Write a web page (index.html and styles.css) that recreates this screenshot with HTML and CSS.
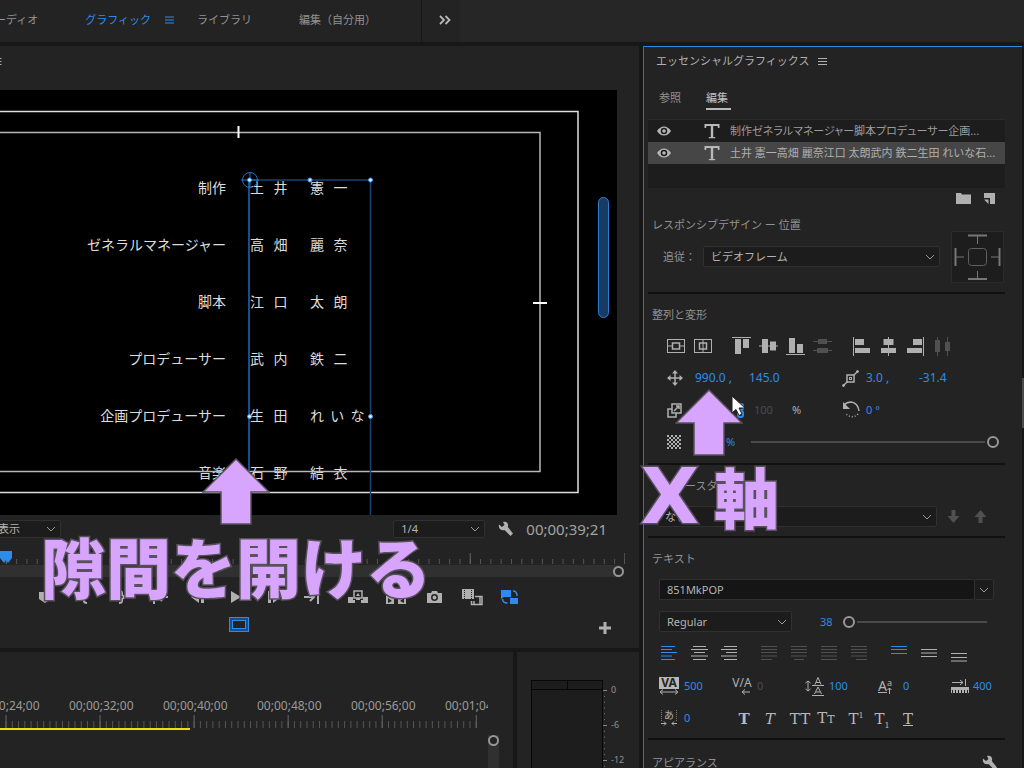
FILE: index.html
```html
<!DOCTYPE html>
<html lang="ja">
<head>
<meta charset="utf-8">
<meta name="viewport" content="width=device-width, initial-scale=1">
<title>エッセンシャルグラフィックス</title>
<link rel="stylesheet" href="styles.css">
</head>
<body>
<svg class="defs" width="0" height="0" aria-hidden="true">
  <symbol id="menu" viewBox="0 0 9 9"><path d="M0 1.500h9M0 4.500h9M0 7.500h9" stroke="currentColor" fill="none"/></symbol>
  <symbol id="eye" viewBox="0 0 14 10"><path d="M0 5Q3 .5 7 .5T14 5Q11 9.500 7 9.500T0 5Z" fill="currentColor"/><circle cx="7" cy="5" r="3.300" fill="#1d1d1d"/><circle cx="7" cy="5" r="1.800" fill="currentColor"/></symbol>
  <symbol id="type" viewBox="0 0 16 16"><path d="M.5 1h15v4h-1.500l-.5-2H9.200v11h2v1.300H4.800V14h2V3H2.500L2 5H.5Z" fill="currentColor"/></symbol>
  <symbol id="wrench" viewBox="0 0 16 16"><path d="M1 3.500 4 6 6.500 4 5 1C9 0 11 3 9.800 6L15 12.500 12.500 15 6.500 9C3 10 0 7.500 1 3.500Z" fill="currentColor"/></symbol>
  <symbol id="lines" viewBox="0 0 16 16"><path d="M0 1.500h16M0 4.500h16M0 7.500h16M0 11h16M0 14.500h16" stroke="currentColor" fill="none"/></symbol>
  <symbol id="arrow" viewBox="0 0 68 67"><path d="M34 1 67 34H49v32H19V34H1Z" fill="#d8a5fe" stroke="#58515c" stroke-width="1.500"/></symbol>
</svg>
<div class="app">
  <header class="topbar">
    <nav class="workspaces">
      <button class="workspace">オーディオ</button>
      <button class="workspace active">グラフィック<svg width="9" height="10"><use href="#menu"/></svg></button>
      <button class="workspace">ライブラリ</button>
      <button class="workspace">編集（自分用）</button>
    </nav>
    <button class="more" aria-label="その他"><svg width="12" height="10" viewBox="0 0 12 10" fill="none" stroke="#b8b8b8" stroke-width="1.800"><path d="M1 1l4 4-4 4M6.500 1l4 4-4 4"/></svg></button>
    <div class="topbar-rest"></div>
  </header>
  <main class="main">
    <div class="left">
      <section class="monitor">
        <div class="monitor-head"><svg width="10" height="9"><use href="#menu"/></svg></div>
        <div class="canvas">
          <div class="credits">
            <span class="role">制作</span><span>土   井</span><span>憲   一</span>
            <span class="role">ゼネラルマネージャー</span><span>高   畑</span><span>麗   奈</span>
            <span class="role">脚本</span><span>江   口</span><span>太   朗</span>
            <span class="role">プロデューサー</span><span>武   内</span><span>鉄   二</span>
            <span class="role">企画プロデューサー</span><span>生   田</span><span>れ  い  な</span>
            <span class="role">音楽</span><span>石   野</span><span>結   衣</span>
          </div>
          <svg class="guides" width="617" height="425" viewBox="0 90 617 425" fill="none">
            <path d="M-5 111.500H578V492.500H-5" stroke="#e0e0e0" stroke-width="1.500"/>
            <path d="M-5 132.500H540V471.500H-5" stroke="#b8b8b8" stroke-width="1.500"/>
            <path d="M238.500 126v12M533 303h14" stroke="#fff" stroke-width="2"/>
            <path d="M249 180V471" stroke="#174f8c" stroke-width="2"/>
            <path d="M249 180H370.500V515" stroke="#174272" stroke-width="1.500"/>
            <circle cx="250" cy="180" r="7.500" stroke="#2274c4"/><path d="M241 180h18M250 172v16" stroke="#2274c4"/>
            <g fill="#d9ecff" stroke="#3b91e8"><circle cx="249.500" cy="180" r="2"/><circle cx="310" cy="180" r="2"/><circle cx="370.500" cy="180" r="2"/><circle cx="249.500" cy="416.500" r="2"/><circle cx="370.500" cy="416.500" r="2"/></g>
            <rect x="598.500" y="197.500" width="10" height="120" rx="5" fill="#173b61" stroke="#2b7fd3"/>
          </svg>
        </div>
        <div class="monitor-row">
          <select class="field zoom-field" aria-label="ズーム"><option>全体表示</option></select>
          <select class="field quality" aria-label="再生時の解像度"><option>1/4</option></select>
          <button class="icon" aria-label="設定"><svg width="16" height="16"><use href="#wrench"/></svg></button>
          <span class="timecode">00;00;39;21</span>
        </div>
        <div class="scrub">
          <svg class="scrub-ticks" width="640" height="28" viewBox="0 550 640 28" fill="none">
            <rect y="565" width="620" height="12" fill="#303030"/>
            <path d="M5.800 561.500H625" stroke="#555" stroke-width="5" stroke-dasharray="1 9.310"/>
            <path d="M5.800 558.500H625" stroke="#666" stroke-width="11" stroke-dasharray="1 153.650"/>
            <path d="M0 551h12v7l-4 5-2-3-2 3-4-5Z" fill="#2d8ceb"/>
            <circle cx="618.500" cy="571.500" r="4.500" fill="#232323" stroke="#969696" stroke-width="2"/>
          </svg>
        </div>
        <div class="transport">
          <div class="buttons">
            <button class="icon" aria-label="マーカー"><svg width="14" height="14" viewBox="0 0 14 14"><path d="M0 2h12v7l-6 4-6-4Z" fill="currentColor"/></svg></button>
            <button class="icon" aria-label="イン"><svg width="8" height="14" viewBox="0 0 8 14"><path d="M7 1Q4 1 4 3v2L1 7l3 2v2q0 2 3 2" stroke="currentColor" stroke-width="2" fill="none"/></svg></button>
            <button class="icon" aria-label="アウト"><svg width="8" height="14" viewBox="0 0 8 14"><path d="M1 1q3 0 3 2v2l3 2-3 2v2q0 2-3 2" stroke="currentColor" stroke-width="2" fill="none"/></svg></button>
            <button class="icon" aria-label="インへ移動"><svg width="16" height="14" viewBox="0 0 16 14"><path d="M2 0v14M16 7H6M10 3 6 7l4 4" stroke="currentColor" stroke-width="2" fill="none"/></svg></button>
            <button class="icon" aria-label="前へ"><svg width="14" height="12" viewBox="0 0 14 12"><path d="M8 0v12L0 6ZM10 0h3v12h-3Z" fill="currentColor"/></svg></button>
            <button class="icon" aria-label="再生"><svg width="12" height="14" viewBox="0 0 12 14"><path d="M1 1l10 6-10 6Z" fill="currentColor"/></svg></button>
            <button class="icon" aria-label="次へ"><svg width="14" height="12" viewBox="0 0 14 12"><path d="M6 0v12l8-6ZM1 0h3v12H1Z" fill="currentColor"/></svg></button>
            <button class="icon" aria-label="アウトへ移動"><svg width="16" height="14" viewBox="0 0 16 14"><path d="M14 0v14M0 7h10M6 3l4 4-4 4" stroke="currentColor" stroke-width="2" fill="none"/></svg></button>
          </div>
          <div class="buttons">
            <button class="icon" aria-label="リフト"><svg width="20" height="14" viewBox="0 0 20 14"><path d="M0 7h5v3h3v-2h4v2h3V7h5v6h-7v-3H7v3H0Z" fill="currentColor"/><path d="M6 1h8v7H6Z" fill="#232323" stroke="currentColor" stroke-width="1.500"/><path d="M8 6l2-3 2 3Z" fill="currentColor"/></svg></button>
            <button class="icon" aria-label="抽出"><svg width="20" height="14" viewBox="0 0 20 14"><path d="M0 6h8v8H0ZM12 6h8v8h-8Z" fill="currentColor"/><path d="M2 8l4 3-4 2M18 8l-4 3 4 2" fill="#232323"/></svg></button>
            <button class="icon" aria-label="フレームを書き出し"><svg width="15" height="12" viewBox="0 0 15 12"><path d="M0 2h4l1-2h5l1 2h4v10H0Z" fill="currentColor"/><circle cx="7.500" cy="6.500" r="2.700" stroke="#232323" stroke-width="1.500" fill="none"/></svg></button>
            <button class="icon" aria-label="比較表示"><svg width="21" height="17" viewBox="0 0 21 17"><path d="M0 0h12v10H0Z" fill="currentColor"/><path d="M2.500 1v9M9.500 1v9" stroke="#232323" stroke-dasharray="1 1"/><path d="M13 7.500h7v8H9.500V12M12 12v3M18 8v8" stroke="currentColor" stroke-width="1.500" fill="none"/></svg></button>
            <button class="icon blue" aria-label="プロキシの切り替え"><svg width="18" height="16" viewBox="0 0 18 16"><path d="M0 1h10v7H3L0 10ZM9 9h8v6H9Z" fill="currentColor"/><path d="M12 2q4 0 4 5M1.500 10q0 4 5 4" stroke="currentColor" stroke-width="1.500" fill="none"/></svg></button>
          </div>
        </div>
        <div class="extra">
          <button class="icon blue" aria-label="セーフマージン"><svg width="20" height="15" viewBox="0 0 20 15"><rect x=".5" y=".5" width="19" height="14" fill="#1d4e83" stroke="currentColor"/><rect x="3.500" y="3.500" width="13" height="8" fill="#232323" stroke="currentColor"/></svg></button>
          <button class="icon add" aria-label="ボタンエディター"><svg width="12" height="12" viewBox="0 0 12 12"><path d="M6 0v12M0 6h12" stroke="currentColor" stroke-width="3"/></svg></button>
        </div>
      </section>
      <div class="bottom">
        <section class="timeline">
          <div class="times"><span>00;00;24;00</span><span>00;00;32;00</span><span>00;00;40;00</span><span>00;00;48;00</span><span>00;00;56;00</span><span>00;01;04;00</span></div>
          <svg class="ruler" width="488" height="16" viewBox="0 714 488 16" fill="none">
            <path d="M5.500 724.500H482" stroke="#555" stroke-width="7" stroke-dasharray="1 5.270"/>
            <path d="M5.500 721.500H482" stroke="#666" stroke-width="13" stroke-dasharray="1 93.050"/>
            <path d="M0 729H190" stroke="#e6e212" stroke-width="2"/>
          </svg>
          <div class="vscroll"><span></span></div>
        </section>
        <section class="meter">
          <div class="meter-box"><div class="peaks"><i></i><i></i></div></div>
          <svg class="meter-ticks" width="5" height="78" viewBox="0 0 5 78"><path d="M1.500 0v78" stroke="#777" stroke-dasharray="1 4.830"/><path d="M0 .5h4M0 35.500h4M0 70.500h4" stroke="#888"/></svg>
          <div class="levels"><span>0</span><span>-6</span><span>-12</span></div>
        </section>
      </div>
    </div>

    <aside class="panel">
      <h1 class="panel-title">エッセンシャルグラフィックス<svg width="9" height="9"><use href="#menu"/></svg></h1>
      <div class="tabs"><button class="tab">参照</button><button class="tab selected">編集</button></div>
      <div class="layers">
        <div class="layer"><svg width="14" height="10"><use href="#eye"/></svg><svg width="16" height="16"><use href="#type"/></svg><span class="palt">制作ゼネラルマネージャー脚本プロデューサー企画...</span></div>
        <div class="layer chosen"><svg width="14" height="10"><use href="#eye"/></svg><svg width="16" height="16"><use href="#type"/></svg><span>土井 憲一高畑 麗奈江口 太朗武内 鉄二生田 れいな石...</span></div>
      </div>
      <div class="layer-tools">
        <button class="icon" aria-label="グループ"><svg width="15" height="11" viewBox="0 0 15 11"><path d="M0 0h5l1 1.500h9V11H0Z" fill="currentColor"/></svg></button>
        <button class="icon" aria-label="新規レイヤー"><svg width="11" height="11" viewBox="0 0 11 11"><path d="M0 0h11v11H6V5H0Z" fill="currentColor"/><path d="M0 6.500h4.500V11Z" fill="currentColor"/></svg></button>
      </div>

      <div class="responsive">
        <div class="responsive-main">
          <h2 class="label">レスポンシブデザイン ー 位置</h2>
          <div class="follow"><label for="follow">追従：</label><select id="follow" class="field"><option>ビデオフレーム</option></select></div>
        </div>
        <svg class="pins" width="53" height="52" viewBox="0 0 53 52" fill="none" stroke="#777"><rect x=".5" y=".5" width="52" height="51" fill="#1d1d1d" stroke="#2b2b2b"/><rect x="17.500" y="17.500" width="18" height="17" rx="3" stroke="#606060"/><path d="M26.500 5v8M26.500 40v8M5 26h8M40 26h8"/><path d="M17 4.500h19M17 48h19M4.500 17v18M48.500 17v18" stroke-width="2"/></svg>
      </div>
      <hr>

      <h2 class="label">整列と変形</h2>
      <div class="row align-row">
        <div class="group g27">
          <button class="icon" aria-label="水平中央"><svg width="18" height="14" viewBox="0 0 18 14" fill="none" stroke="currentColor"><rect x=".5" y=".5" width="17" height="13"/><rect x="5.500" y="4" width="7" height="6" stroke-width="1.500"/><path d="M1 7h4M13 7h4"/></svg></button>
          <button class="icon" aria-label="垂直中央"><svg width="18" height="14" viewBox="0 0 18 14" fill="none" stroke="currentColor"><rect x=".5" y=".5" width="17" height="13"/><rect x="5.500" y="4" width="7" height="6" stroke-width="1.500"/><path d="M9 1v12"/></svg></button>
        </div>
        <div class="group g27">
          <button class="icon" aria-label="上揃え"><svg width="19" height="18" viewBox="0 0 19 18"><path d="M0 0h19v1H0ZM3 2h6v15H3ZM11 2h6v9h-6Z" fill="currentColor"/></svg></button>
          <button class="icon" aria-label="垂直方向中央揃え"><svg width="19" height="16" viewBox="0 0 19 16"><path d="M0 7.500h19v1H0ZM3 1h6v14H3ZM11 3.500h6v9h-6Z" fill="currentColor"/></svg></button>
          <button class="icon" aria-label="下揃え"><svg width="19" height="18" viewBox="0 0 19 18"><path d="M0 17h19v1H0ZM3 1h6v15H3ZM11 7h6v9h-6Z" fill="currentColor"/></svg></button>
          <button class="icon off" aria-label="垂直分布" disabled><svg width="19" height="16" viewBox="0 0 19 16"><path d="M0 3h5V1h9v2h5v1h-5v2H5V4H0ZM0 12h4v-2h11v2h4v1h-4v2H4v-2H0Z" fill="currentColor"/></svg></button>
        </div>
        <div class="group g27">
          <button class="icon" aria-label="左揃え"><svg width="17" height="19" viewBox="0 0 17 19"><path d="M0 0h1v19H0ZM2 2h9v6H2ZM2 11h15v5H2Z" fill="currentColor"/></svg></button>
          <button class="icon" aria-label="水平方向中央揃え"><svg width="15" height="19" viewBox="0 0 15 19"><path d="M7 0h1v19H7ZM2.500 2h10v6h-10ZM0 11h15v5H0Z" fill="currentColor"/></svg></button>
          <button class="icon" aria-label="右揃え"><svg width="17" height="19" viewBox="0 0 17 19"><path d="M16 0h1v19h-1ZM6 2h9v6H6ZM0 11h15v5H0Z" fill="currentColor"/></svg></button>
          <button class="icon off" aria-label="水平分布" disabled><svg width="17" height="19" viewBox="0 0 17 19"><path d="M3 0h1v3h2v12H4v4H3v-4H1V3h2ZM13 0h1v5h2v9h-2v5h-1v-5h-2V5h2Z" fill="currentColor"/></svg></button>
        </div>
      </div>
      <div class="row values position">
        <svg width="16" height="16" viewBox="0 0 16 16"><path d="M8 1v14M1 8h14" stroke="currentColor" stroke-width="1.500"/><path d="M8 0l3 3.500H5ZM8 16l3-3.500H5ZM0 8l3.500-3v6ZM16 8l-3.500-3v6Z" fill="currentColor"/></svg>
        <button class="hot">990.0 ,</button><button class="hot">145.0</button>
        <svg width="17" height="17" viewBox="0 0 17 17" fill="none" stroke="currentColor"><path d="M1.500 15.500 15.500 1.500" stroke-width="1.500"/><rect x="5" y="5" width="7" height="7" fill="#232323" stroke-width="1.500"/><rect x="7.500" y="7.500" width="2" height="2"/><circle cx="1.500" cy="15.500" r="1" fill="currentColor"/><circle cx="15.500" cy="1.500" r="1" fill="currentColor"/></svg>
        <button class="hot">3.0 ,</button><button class="hot">-31.4</button>
      </div>
      <div class="row values">
        <svg width="15" height="15" viewBox="0 0 15 15" fill="none" stroke="currentColor" stroke-width="1.500"><rect x="5" y="1" width="9" height="9"/><path d="M5 6H1v8h8v-4M7 8l5-5M9 3h3v3"/></svg>
        <span class="link"><svg width="9" height="15" viewBox="0 0 9 15" fill="none" stroke="#2d8ceb" stroke-width="2"><rect x="2" y="1" width="5" height="6" rx="2"/><rect x="2" y="8" width="5" height="6" rx="2"/></svg></span>
        <span class="percent"><span class="dim">100</span><span>%</span></span>
        <svg width="18" height="18" viewBox="0 0 18 18" fill="none" stroke="currentColor" stroke-width="1.500"><path d="M2 4q3-3 7-3 7 1 8 9"/><path d="M1 1v7h7Z" fill="currentColor" stroke="none"/><path d="M16 13q-6 6-13-1" stroke-dasharray="1 2"/></svg>
        <button class="hot">0 °</button>
      </div>
      <div class="row opacity">
        <svg width="14" height="14" viewBox="0 0 14 14"><path d="M0 1h14M0 5h14M0 9h14M0 13h14" stroke="currentColor" stroke-width="2" stroke-dasharray="2 2"/><path d="M2 3h12M2 7h12M2 11h12" stroke="currentColor" stroke-width="2" stroke-dasharray="2 2"/></svg>
        <button class="hot">100.0 %</button>
        <input class="slider" type="range" value="100" aria-label="不透明度">
      </div>
      <hr>

      <h2 class="label master">マスタースタイル</h2>
      <div class="style-row">
        <select class="field" aria-label="マスタースタイル"><option>なし</option></select>
        <button class="icon off" aria-label="下へ"><svg width="13" height="13" viewBox="0 0 13 13"><path d="M4.500 0h4v6h4l-6 7-6-7h4Z" fill="currentColor"/></svg></button>
        <button class="icon off" aria-label="上へ"><svg width="13" height="13" viewBox="0 0 13 13"><path d="M4.500 13h4V7h4l-6-7-6 7h4Z" fill="currentColor"/></svg></button>
      </div>
      <hr>

      <h2 class="label">テキスト</h2>
      <div class="font-row"><input class="field font-field" aria-label="フォント" value="851MkPOP"><button class="field font-open" aria-label="フォント一覧"></button></div>
      <div class="weight-row">
        <select class="field" aria-label="スタイル"><option>Regular</option></select>
        <button class="hot">38</button>
        <input class="slider" type="range" value="0" aria-label="サイズ">
      </div>
      <div class="row para">
        <div class="group g30">
          <button class="icon blue" aria-label="左"><svg width="16" height="16" viewBox="0 0 16 16" stroke="currentColor"><path d="M0 1.500h14M0 4.500h11M0 7.500h16M0 11h11M0 14.500h14"/></svg></button>
          <button class="icon" aria-label="中央"><svg width="17" height="16" viewBox="0 0 17 16" stroke="currentColor"><path d="M2 1.500h13M0 4.500h17M3 7.500h11M0 11h17M2 14.500h13"/></svg></button>
          <button class="icon" aria-label="右"><svg width="16" height="16" viewBox="0 0 16 16" stroke="currentColor"><path d="M3 1.500h13M0 4.500h16M5 7.500h11M0 11h16M3 14.500h13"/></svg></button>
        </div>
        <div class="group g30">
          <button class="icon off" disabled aria-label="均等 左"><svg width="16" height="16" viewBox="0 0 16 16" stroke="currentColor"><path d="M0 1.500h16M0 4.500h16M0 7.500h16M0 11h16M0 14.500h11"/></svg></button>
          <button class="icon off" disabled aria-label="均等 中央"><svg width="16" height="16" viewBox="0 0 16 16" stroke="currentColor"><path d="M0 1.500h16M0 4.500h16M0 7.500h16M0 11h16M3 14.500h10"/></svg></button>
          <button class="icon off" disabled aria-label="両端"><svg width="16" height="16"><use href="#lines"/></svg></button>
          <button class="icon off" disabled aria-label="均等 右"><svg width="16" height="16" viewBox="0 0 16 16" stroke="currentColor"><path d="M0 1.500h16M0 4.500h16M0 7.500h16M0 11h16M5 14.500h11"/></svg></button>
        </div>
        <div class="group g30">
          <button class="icon blue" aria-label="上"><svg width="16" height="16" viewBox="0 0 16 16" stroke="currentColor"><path d="M0 1.500h16M0 4.500h16M0 8.500h16"/></svg></button>
          <button class="icon" aria-label="中"><svg width="16" height="16" viewBox="0 0 16 16" stroke="currentColor"><path d="M0 4.500h16M0 8h16M0 11.500h16"/></svg></button>
          <button class="icon" aria-label="下"><svg width="16" height="18" viewBox="0 0 16 18" stroke="currentColor"><path d="M0 9.500h16M0 13.500h16M0 17h16"/></svg></button>
        </div>
      </div>
      <div class="row metrics">
        <div class="metric"><span class="glyph"><b class="va">VA</b><svg width="20" height="6" viewBox="0 0 20 6"><path d="M2 3h16M4 .5 1 3l3 2.500M16 .5 19 3l-3 2.500" stroke="currentColor" fill="none"/></svg></span><button class="hot">500</button></div>
        <div class="metric"><span class="glyph"><span class="kern">V/A</span><svg width="20" height="6" viewBox="0 0 20 6"><path d="M10 3h8M13 .5 10 3l3 2.500" stroke="currentColor" fill="none"/></svg></span><span class="dim">0</span></div>
        <div class="metric"><span class="lead"><svg width="6" height="12" viewBox="0 0 6 12"><path d="M3 1v10M.5 3 3 1l2.500 2M.5 9 3 11l2.500-2" stroke="currentColor" fill="none"/></svg><svg width="12" height="19" viewBox="0 0 12 19" fill="none" stroke="currentColor"><path d="M3 7.500 6 .5l3 7M4 5.500h4M0 8.500h12M2.500 17 6 10l3.500 7M4 15h4M0 18.500h12"/></svg></span><button class="hot">100</button></div>
        <div class="metric"><span class="glyph base"><u>A</u><sup>a</sup><svg width="5" height="7" viewBox="0 0 5 7"><path d="M2.500 1v6M.5 3l2-2 2 2" stroke="currentColor" fill="none"/></svg></span><button class="hot">0</button></div>
        <div class="metric"><svg width="18" height="15" viewBox="0 0 18 15"><path d="M1 3.500h11M9 1l3 2.500L9 6M14.500 0v7" stroke="currentColor" fill="none"/><path d="M0 8h18v6H0Z" fill="currentColor"/><path d="M1 12.500h16" stroke="#232323" stroke-width="3" stroke-dasharray="1 2"/></svg><button class="hot">400</button></div>
      </div>
      <div class="row faux">
        <div class="metric"><span class="tsume"><b>あ</b><svg width="18" height="5" viewBox="0 0 18 5"><path d="M1 2.500h5M4 .5l2 2-2 2M17 2.500h-5M14 .5l-2 2 2 2" stroke="currentColor" fill="none"/></svg></span><button class="hot">0</button></div>
        <div class="faux-groups">
          <div class="group g26"><button class="serif"><b>T</b></button><button class="serif"><i>T</i></button></div>
          <div class="group g26"><button class="serif">TT</button><button class="serif">T<small>T</small></button></div>
          <div class="group g26"><button class="serif">T<sup>1</sup></button><button class="serif">T<sub>1</sub></button><button class="serif"><u>T</u></button></div>
        </div>
      </div>
      <hr>
      <div class="appearance"><h2 class="label">アピアランス</h2><button class="icon" aria-label="アピアランス設定"><svg width="16" height="16"><use href="#wrench"/></svg></button></div>
    </aside>
    <div class="edge"><span></span></div>
  </main>

  <svg class="note arrow-left" width="68" height="67"><use href="#arrow"/></svg>
  <p class="note caption-left">隙間を開ける</p>
  <svg class="note arrow-right" width="68" height="67"><use href="#arrow"/></svg>
  <p class="note caption-right"><span class="latin">X</span> 軸</p>
  <svg class="note cursor" width="15" height="22" viewBox="0 0 15 22"><path d="M1 1v17l4-3.500 3 6 3-1.500-3-6h6Z" fill="#fff" stroke="#222"/></svg>
</div>
</body>
</html>
```

FILE: styles.css
```css
* { box-sizing: border-box; }
body {
  margin: 0;
  background: #171717;
  color: #929292;
  font: 11px/16px "Noto Sans", "Noto Sans CJK JP", sans-serif;
}
button, select, input { font: inherit; color: inherit; margin: 0; }
button { padding: 0; border: 0; background: none; }
svg { display: block; flex: none; }
h1, h2, p { margin: 0; font-weight: 400; font-size: 11px; }
.defs { position: absolute; }
.app {
  position: relative;
  display: flex;
  flex-direction: column;
  gap: 4px;
  height: 100vh;
  overflow: hidden;
}

/* workspace bar */
.topbar { display: flex; height: 42px; flex: none; background: #232323; }
.workspaces {
  display: flex;
  align-items: center;
  gap: 23px;
  width: 438px;
  margin-left: -16px;
  padding-bottom: 2px;
  border-right: 1px solid #171717;
}
.workspace { display: flex; align-items: center; padding-right: 24px; white-space: nowrap; }
.workspace.active { padding-right: 0; gap: 14px; color: #2d8ceb; }
.more { padding: 0 10px 3px 17px; }
.topbar-rest { flex: 1; background: #262626; }

.main {
  flex: 1;
  min-height: 0;
  display: grid;
  grid-template-columns: minmax(0, 1fr) 379px 2px;
}
.left { display: flex; flex-direction: column; gap: 4px; margin-right: 4px; min-height: 0; }

/* program monitor */
.monitor { background: #232323; overflow: hidden; flex: none; }
.monitor-head { height: 44px; padding-top: 11px; }
.monitor-head svg { margin-left: -8px; color: #aaa; }
.canvas { position: relative; height: 425px; margin-right: 22px; background: #000; overflow: hidden; }
.credits {
  display: grid;
  grid-template-columns: 226px 60px 80px;
  grid-auto-rows: 57px;
  align-items: center;
  padding-top: 68px;
  color: #dcdcdc;
  font: 400 14px/20px "Noto Sans CJK JP", sans-serif;
}
.credits span { white-space: pre; }
.credits span:not(.role) { margin-left: 24px; margin-right: -24px; }
.role { text-align: right; }
.guides { position: absolute; left: 0; top: 0; }
.monitor-row { display: flex; align-items: center; height: 27px; }
.field {
  appearance: none;
  height: 21px;
  min-width: 0;
  padding: 0 22px 0 7px;
  border: 1px solid #303030;
  border-radius: 2px;
  background: #1c1c1c url("data:image/svg+xml,%3Csvg xmlns='http://www.w3.org/2000/svg' width='10' height='6'%3E%3Cpath d='M1 1l4 4 4-4' fill='none' stroke='%23999'/%3E%3C/svg%3E") no-repeat right 4px center;
  color: #b4b4b4;
}
.zoom-field { width: 88px; height: 18px; margin-left: -27px; padding-left: 2px; line-height: 14px; }
.quality { width: 92px; height: 18px; margin-left: auto; line-height: 14px; }
.monitor-row .icon { margin-left: 13px; }
.timecode { margin: 0 32px 0 12px; font-size: 15px; line-height: 20px; color: #a2a2a2; }
.scrub { height: 39px; padding-top: 8px; overflow: hidden; }
.icon { display: flex; align-items: center; justify-content: center; color: #b0b0b0; }
.icon.blue { color: #2d8ceb; }
.icon.off { color: #505050; }
.transport { display: flex; gap: 8px; height: 32px; padding-left: 27px; }
.buttons { display: grid; grid-auto-flow: column; grid-auto-columns: 38px; }
.extra { display: grid; grid-template-columns: 1fr 34px; height: 35px; padding-left: 229px; padding-right: 17px; padding-bottom: 12px; }
.extra .icon { justify-content: flex-start; }
.extra .add { justify-content: center; padding-top: 7px; }

/* timeline and level meter */
.bottom { flex: 1; min-height: 0; display: grid; grid-template-columns: minmax(0, 1fr) 122px; gap: 4px; }
.timeline {
  display: grid;
  grid-template-columns: 488px 11px;
  grid-template-rows: 62px 18px 1fr;
  background: #232323;
  overflow: hidden;
}
.times {
  display: flex;
  align-items: flex-end;
  overflow: hidden;
  font-size: 12px;
  color: #9b9b9b;
}
.times span { flex: none; width: 94px; }
.times span:first-child { margin-left: -25px; }
.ruler { grid-column: 1; }
.vscroll { grid-column: 2; grid-row: 3; margin-top: 3px; background: #303030; }
.vscroll span { display: block; width: 11px; height: 11px; border: 2px solid #969696; border-radius: 50%; background: #232323; }
.meter { display: flex; padding: 28px 8px 0 14px; background: #232323; overflow: hidden; }
.meter-box { width: 72px; background: #1d1d1d; border: 1px solid #080808; border-bottom: 0; }
.peaks { display: grid; grid-template-columns: 1fr 1fr; height: 9px; border-bottom: 1px solid #080808; }
.peaks i + i { border-left: 1px solid #080808; }
.meter-ticks { margin-top: 10px; }
.levels { display: grid; grid-auto-rows: 35px; padding: 2px 0 0 3px; font-size: 9px; height: 100px; }

/* essential graphics panel */
.panel {
  display: flex;
  flex-direction: column;
  min-height: 0;
  overflow: hidden;
  padding: 0 17px 0 4px;
  border-left: 1px solid #2a72bd;
  border-top: 1px solid #2d8ceb;
  background: #232323;
}
.panel > * { flex: none; }
.panel-title { display: flex; align-items: center; gap: 9px; height: 28px; padding-left: 8px; color: #b0b0b0; }
.tabs { display: flex; gap: 24px; padding: 12px 0 9px 11px; }
.tab { height: 23px; width: 23px; text-align: left; border-bottom: 2px solid transparent; white-space: nowrap; }
.tab.selected { width: 25px; border-color: #b8b8b8; color: #c4c4c4; }
.layers { min-height: 69px; padding-bottom: 24px; background: #1d1d1d; border-top: 1px solid #2c2c2c; }
.layer { display: grid; grid-template-columns: 47px 26px minmax(0, 1fr); align-items: center; height: 22px; padding-left: 9px; white-space: nowrap; color: #9c9c9c; }
.layer svg { color: #b8b8b8; }
.layer.chosen { background: #464646; color: #b0b0b0; }
.layer span { padding-bottom: 1px; }
.palt { font-feature-settings: "palt"; }
.layer-tools { display: flex; justify-content: flex-end; gap: 13px; height: 21px; padding-right: 10px; }
.label { height: 20px; line-height: 20px; padding-left: 4px; white-space: nowrap; }
.responsive { display: grid; grid-template-columns: minmax(0, 1fr) 53px; gap: 12px; align-items: end; margin-top: 6px; height: 68px; }
.responsive-main { height: 68px; }
.follow { display: flex; align-items: center; gap: 7px; margin-top: 11px; padding-left: 15px; }
.follow label { width: 33px; white-space: nowrap; }
.follow .field { flex: 1; }
.pins { margin-left: -1px; }
hr { width: 100%; height: 2px; margin: 9px 0 11px; border: 0; background: #111; }
.row { display: flex; align-items: center; height: 32px; }
.group { display: grid; grid-auto-flow: column; height: 24px; }
.g27 { grid-auto-columns: 27px; }
.g30 { grid-auto-columns: 30px; }
.g26 { grid-auto-columns: 26px; }
.align-row { gap: 12px; padding-left: 14px; margin-top: 5px; }
.values { display: grid; grid-template-columns: 33px 54px 88px 29px 53px 1fr; padding-left: 14px; color: #b0b0b0; }
.position { font-size: 12px; }
.values > svg, .opacity > svg { margin-left: 5px; }
.hot { color: #2d8ceb; text-align: left; white-space: nowrap; }
.dim { color: #4c4c4c; }
.link { padding-left: 41px; }
.percent { display: flex; gap: 19px; padding-left: 5px; }
.opacity { display: grid; grid-template-columns: 33px 56px minmax(0, 1fr); padding: 0 6px 0 14px; color: #b0b0b0; }
.opacity + hr { margin-top: 5px; }
.slider { appearance: none; width: 100%; height: 12px; background: linear-gradient(#4a4a4a, #4a4a4a) no-repeat center / 100% 2px; }
.slider::-webkit-slider-thumb { appearance: none; width: 12px; height: 12px; border: 2px solid #989898; border-radius: 50%; background: #232323; box-shadow: 0 0 0 2px #232323; }
.style-row { display: grid; grid-template-columns: minmax(0, 1fr) 32px 22px; margin-top: 10px; padding: 0 14px 0 9px; }
.style-row .icon:last-child { justify-content: flex-end; padding-right: 4px; }
.font-row { display: grid; grid-template-columns: minmax(0, 1fr) 20px; margin-top: 10px; padding: 0 11px; }
.font-field { padding-right: 0; border-right: 0; background: #151515; }
.font-open { padding: 0; }
.weight-row { display: grid; grid-template-columns: 133px 51px minmax(0, 1fr); align-items: center; margin-top: 11px; padding: 0 18px 0 11px; }
.weight-row .hot { padding-left: 28px; }
.para { gap: 10px; padding-left: 6px; margin-top: 5px; }
.metrics { display: grid; grid-template-columns: repeat(4, 73px) 1fr; margin-top: 1px; padding-left: 11px; color: #b0b0b0; }
.metric { display: flex; align-items: center; gap: 5px; white-space: nowrap; }
.metric:last-child { gap: 4px; }
.glyph { display: grid; justify-items: center; width: 20px; }
.va { width: 20px; height: 12px; background: #b8b8b8; color: #232323; font-size: 12px; line-height: 12px; text-align: center; }
.kern { font-size: 12px; line-height: 12px; }
.lead { display: flex; align-items: center; width: 19px; gap: 1px; }
.base { display: flex; font-size: 14px; line-height: 16px; }
.base sup { font-size: 9px; line-height: 9px; }
.base svg { align-self: flex-end; margin-left: -5px; }
.faux { padding-left: 11px; color: #b0b0b0; }
.faux .metric { width: 72px; }
.tsume { display: grid; justify-items: center; width: 20px; font-size: 10px; line-height: 11px; }
.tsume b { font-weight: 400; border: 1px dotted #777; border-width: 0 1px; padding: 0 2px; }
.faux-groups { display: flex; gap: 4px; }
.serif { padding-top: 2px; font: 15px/20px "DejaVu Serif", serif; color: #b8b8b8; white-space: nowrap; }
.serif small { font-size: 11px; }
.serif sup, .serif sub { font-size: 8px; line-height: 8px; }
.faux + hr { margin-top: 4px; margin-bottom: 13px; }
.appearance { display: flex; justify-content: space-between; padding-right: 7px; }
.edge { padding-top: 332px; }
.edge span { display: block; height: 50px; background: #4a4a4a; }

/* annotations over the interface */
.note { position: absolute; color: #d8a5fe; }
.caption-left, .caption-right {
  font: 900 65px/80px "Noto Sans CJK JP", sans-serif;
  white-space: nowrap;
  -webkit-text-stroke: 3px #58515c;
  paint-order: stroke fill;
}
.latin { font: 700 76px/80px "DejaVu Sans", sans-serif; }
.arrow-left { left: 202px; top: 458px; }
.caption-left { left: 41px; top: 525px; }
.arrow-right { right: 281px; top: 389px; }
.caption-right { right: 245px; top: 455px; }
.cursor { right: 278px; top: 395px; }
```
